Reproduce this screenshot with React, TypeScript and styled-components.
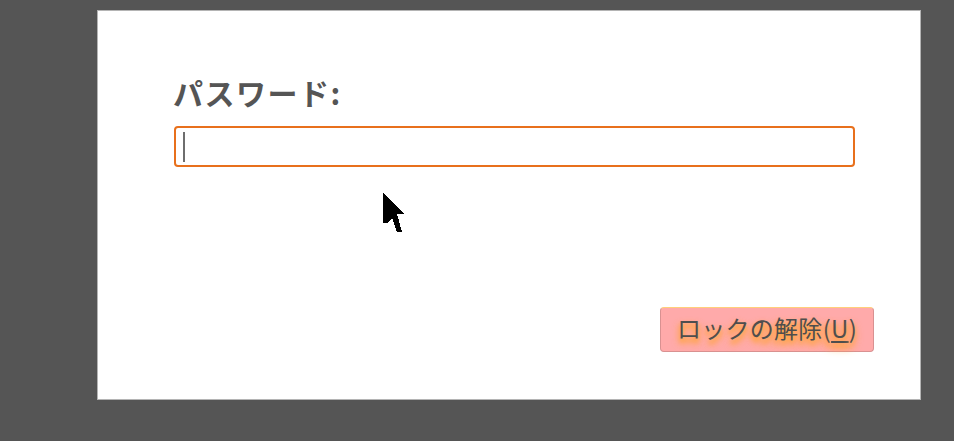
import React from "react";
import styled, { createGlobalStyle } from "styled-components";

const GlobalStyle = createGlobalStyle`
  html, body {
    margin: 0;
    padding: 0;
    background: #555555;
    height: 100%;
  }
  #root {
    height: 100%;
  }
`;

const Screen = styled.div`
  width: 954px;
  height: 441px;
  padding: 10px 0 0 97px;
  box-sizing: border-box;
  position: relative;
  overflow: hidden;
`;

const Dialog = styled.div`
  width: 824px;
  height: 390px;
  box-sizing: border-box;
  background: #ffffff;
  border: 1px solid #b4b4b4;
  padding: 62px 46px 0 76px;
  display: flex;
  flex-direction: column;
  font-family: "Noto Sans CJK JP", "Noto Sans", sans-serif;
`;

const Label = styled.label`
  font-size: 30px;
  font-weight: 700;
  color: #555555;
  line-height: 38px;
  letter-spacing: 1.5px;
  margin-left: -1px;
`;

const Field = styled.div`
  margin-top: 15px;
  width: 681px;
  height: 41px;
  box-sizing: border-box;
  border: 2px solid #e8701c;
  border-radius: 4px;
  background: #ffffff;
  display: flex;
  align-items: center;
  padding-left: 7px;
`;

const Caret = styled.span`
  display: block;
  width: 2px;
  height: 30px;
  background: #6e6e6e;
`;

const Actions = styled.div`
  margin-top: auto;
  margin-bottom: 47px;
  display: flex;
  justify-content: flex-end;
`;

const Button = styled.button`
  width: 214px;
  height: 45px;
  box-sizing: border-box;
  background: #ffaaaa;
  border: 1px solid #d99191;
  border-top-color: #ffcf7a;
  border-radius: 4px;
  font-family: "Noto Sans CJK JP", "Noto Sans", sans-serif;
  font-size: 24px;
  letter-spacing: 0.3px;
  line-height: 30px;
  color: #4e4e4e;
  padding: 0 0 4px;
  text-shadow: 0 4px 4px #ffa54a, 0 4px 6px #ffa54a, 0 5px 8px #ffa54a;
  cursor: default;

  u {
    text-decoration-thickness: 2px;
    text-underline-offset: 3px;
  }
`;

const Pointer = styled.svg`
  position: absolute;
  left: 383px;
  top: 193px;
`;

const App = () => {
  return (
    <>
      <GlobalStyle />
      <Screen>
        <Dialog>
          <Label>パスワード:</Label>
          <Field>
            <Caret />
          </Field>
          <Actions>
            <Button>
              ロックの解除(<u>U</u>)
            </Button>
          </Actions>
        </Dialog>
        <Pointer width="23" height="40" viewBox="0 0 23 40" shapeRendering="crispEdges">
          <path d="M0 0 L22 21 L14 21 L19 39 L14 39 L9 25 L4 30 L0 30 Z" fill="#000" />
        </Pointer>
      </Screen>
    </>
  );
};

export default App;
